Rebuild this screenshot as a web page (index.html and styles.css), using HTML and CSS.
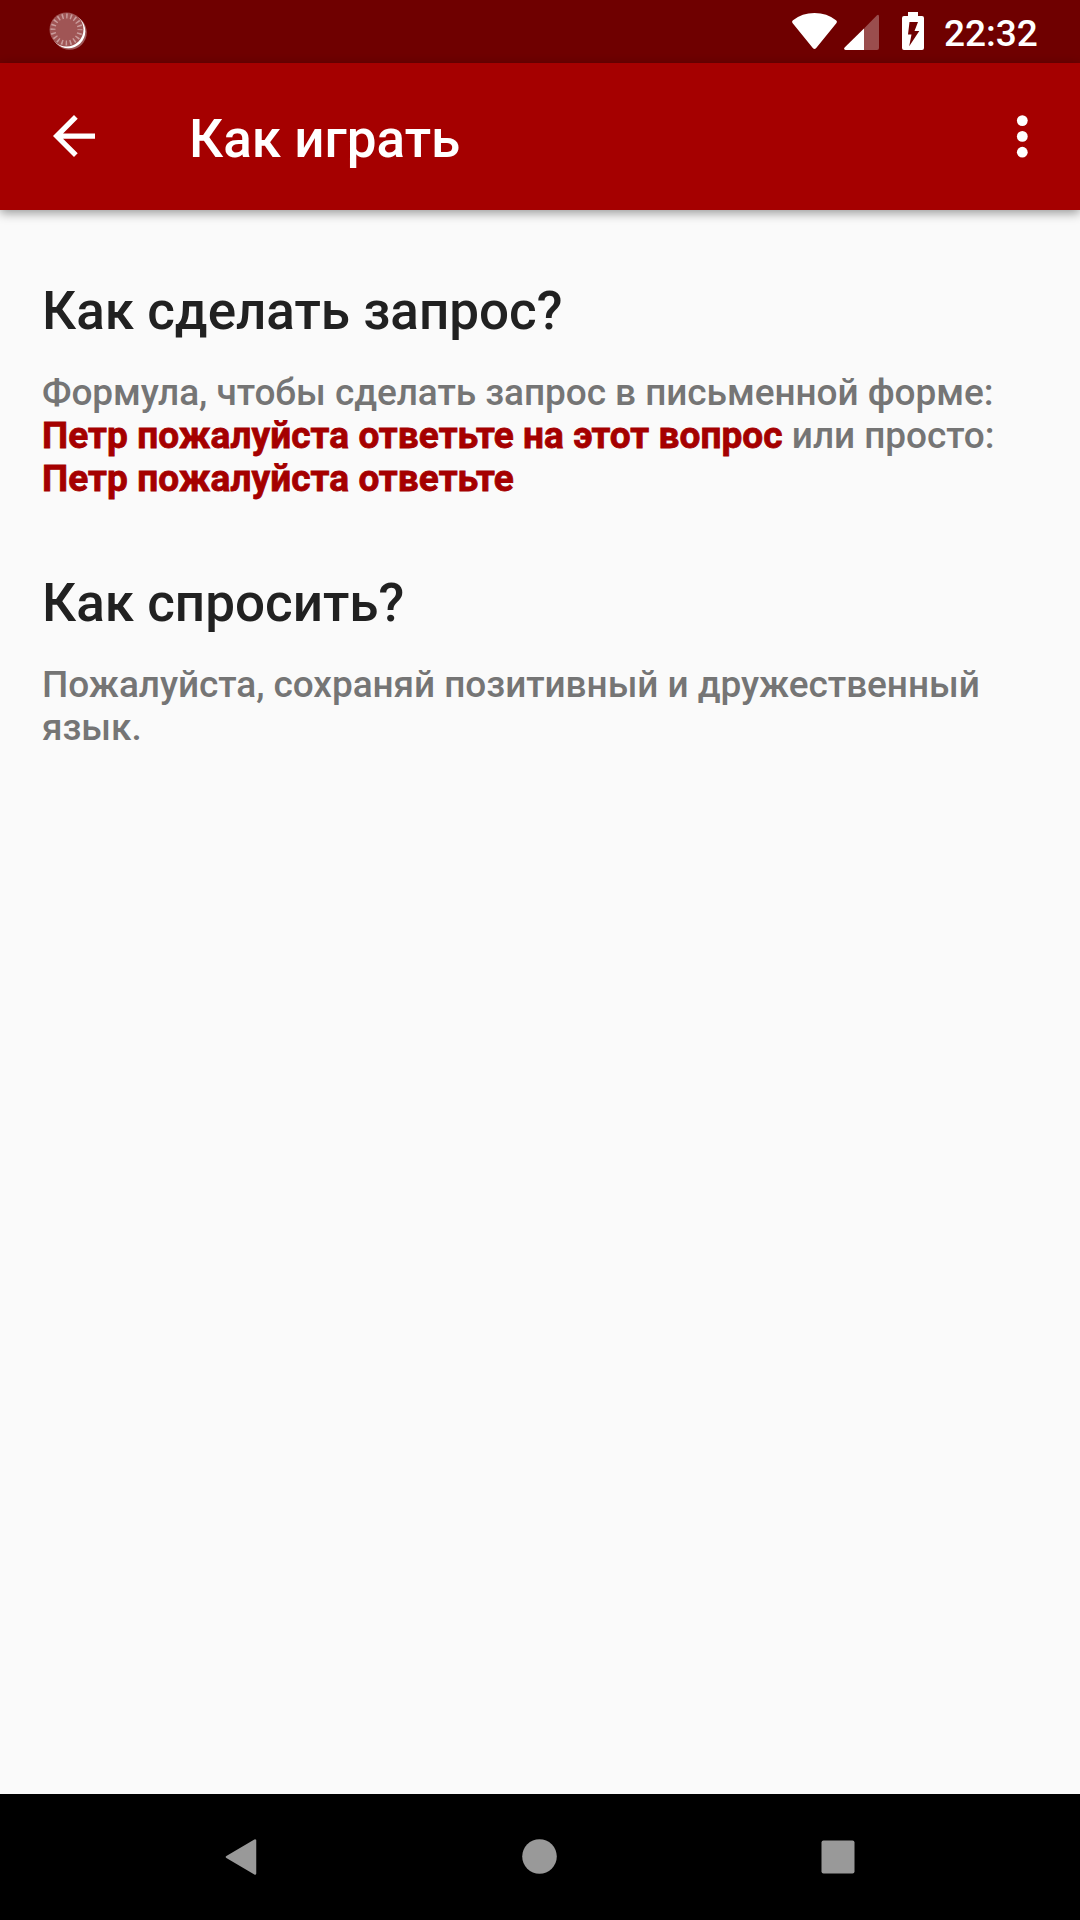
FILE: index.html
```html
<!DOCTYPE html>
<html lang="ru">
<head>
    <meta charset="UTF-8">
    <meta name="viewport" content="width=device-width, initial-scale=1.0">
    <title>Как играть</title>
    <link rel="stylesheet" href="styles.css">
</head>
<body>
    <div class="status-bar">
        <svg class="sync" width="40" height="40" viewBox="0 0 40 40">
            <circle cx="21.500" cy="21.500" r="17.300" fill="#a05a5a"/>
            <circle cx="20.300" cy="20.300" r="17" fill="#fff"/>
            <circle cx="18.500" cy="18.500" r="17" fill="#a05555"/>
            <circle cx="18.500" cy="18.500" r="13.500" fill="none" stroke="#c99c9c" stroke-width="5" stroke-dasharray="1.500 2.741" stroke-dashoffset="0.750"/>
        </svg>
        <div class="status-icons">
            <svg class="wifi" width="45" height="36" viewBox="0 0 45 36">
                <path d="M21 35.300L0.500 10Q-0.500 8.500 1 7.300Q10 0 22.500 0T44 7.300Q45.500 8.500 44.500 10L24 35.300Q22.500 36.700 21 35.300Z" fill="#fff"/>
            </svg>
            <svg class="signal" width="35" height="36" viewBox="0 0 35 36">
                <path d="M20 14.500L33 1.200Q35 0 35 2.500V34Q35 36 33 36H20Z" fill="#fff" opacity="0.3"/>
                <path d="M20 14.500V36H1.500Q-0.800 35.500 0.600 33.600Z" fill="#fff"/>
            </svg>
            <svg class="battery" width="22" height="38" viewBox="0 0 22 38">
                <path d="M6 0H16V4H20Q22 4 22 6V36Q22 38 20 38H2Q0 38 0 36V6Q0 4 2 4H6Z" fill="#fff"/>
                <path d="M7.500 10H16L12.500 19H17.300L7.200 34.200L9.500 22.500H6Z" fill="#6f0000"/>
            </svg>
            <span class="clock">22:32</span>
        </div>
    </div>

    <header class="toolbar">
        <svg class="back" width="42" height="42" viewBox="4 4 16 16">
            <path d="M20 11H7.830l5.590-5.590L12 4l-8 8 8 8 1.410-1.410L7.830 13H20v-2z" fill="#fff"/>
        </svg>
        <h1>Как играть</h1>
        <svg class="more" width="12" height="43" viewBox="0 0 12 43">
            <circle cx="6.300" cy="5.600" r="5.400" fill="#fff"/>
            <circle cx="6.300" cy="21.400" r="5.400" fill="#fff"/>
            <circle cx="6.300" cy="37.200" r="5.400" fill="#fff"/>
        </svg>
    </header>

    <main class="content">
        <section>
            <h2>Как сделать запрос?</h2>
            <p>Формула, чтобы сделать запрос в письменной форме:<br>
            <b>Петр пожалуйста ответьте на этот вопрос</b> или просто:<br>
            <b>Петр пожалуйста ответьте</b></p>
        </section>
        <section>
            <h2>Как спросить?</h2>
            <p>Пожалуйста, сохраняй позитивный и дружественный<br>язык.</p>
        </section>
    </main>

    <nav class="nav-bar">
        <svg width="32" height="36" viewBox="0 0 32 36"><path d="M30 1.500V34.500L2 18Z" fill="#999" stroke="#999" stroke-width="2.500" stroke-linejoin="round"/></svg>
        <svg width="35" height="36" viewBox="0 0 35 36"><circle cx="17.500" cy="17.500" r="17.300" fill="#999"/></svg>
        <svg width="34" height="34" viewBox="0 0 34 34"><rect x="0.500" y="0.500" width="33" height="33" rx="2" fill="#999"/></svg>
    </nav>
</body>
</html>
```
FILE: styles.css
```css
* {
    box-sizing: border-box;
}
body {
    display: flex;
    flex-direction: column;
    height: 1920px;
    margin: 0;
    background-color: #fafafa;
    font-family: Roboto, sans-serif;
    font-weight: 500;
}
svg {
    display: block;
    flex: none;
}
h1, h2, p {
    margin: 0;
    font-weight: 500;
    white-space: nowrap;
}
.status-bar {
    display: flex;
    justify-content: space-between;
    height: 63px;
    padding: 0 42px 0 48px;
    background-color: #6f0000;
}
.sync {
    margin-top: 11px;
}
.status-icons {
    display: flex;
    align-items: flex-start;
    width: 246px;
}
.wifi {
    margin-top: 13px;
}
.signal {
    margin: 14px 0 0 7px;
}
.battery {
    margin: 12px 0 0 23px;
}
.clock {
    margin: 10px 0 0 20px;
    color: #fff;
    font-size: 37px;
    line-height: 47px;
}
.toolbar {
    display: flex;
    align-items: center;
    height: 147px;
    padding: 0 52px 0 53px;
    background-color: #a50000;
    box-shadow: 0 3px 10px rgba(0, 0, 0, 0.4);
}
.toolbar h1 {
    margin: 4px auto 0 94px;
    color: #fff;
    font-size: 53px;
    line-height: 62px;
}
.back {
    margin-bottom: 1px;
}
.content {
    flex: 1;
    padding: 70px 42px 0;
}
.content section {
    height: 292px;
}
.content h2 {
    margin-bottom: 29px;
    color: #212121;
    font-size: 53px;
    line-height: 62px;
}
.content p {
    color: #757575;
    font-size: 37px;
    line-height: 43px;
    letter-spacing: -0.06px;
}
.content b {
    color: #a50000;
    font-weight: 700;
    letter-spacing: 0.07px;
    -webkit-text-stroke: 0.8px #a50000;
}
.nav-bar {
    display: flex;
    justify-content: space-between;
    align-items: center;
    height: 126px;
    padding: 0 225px;
    background-color: #000;
}
```
